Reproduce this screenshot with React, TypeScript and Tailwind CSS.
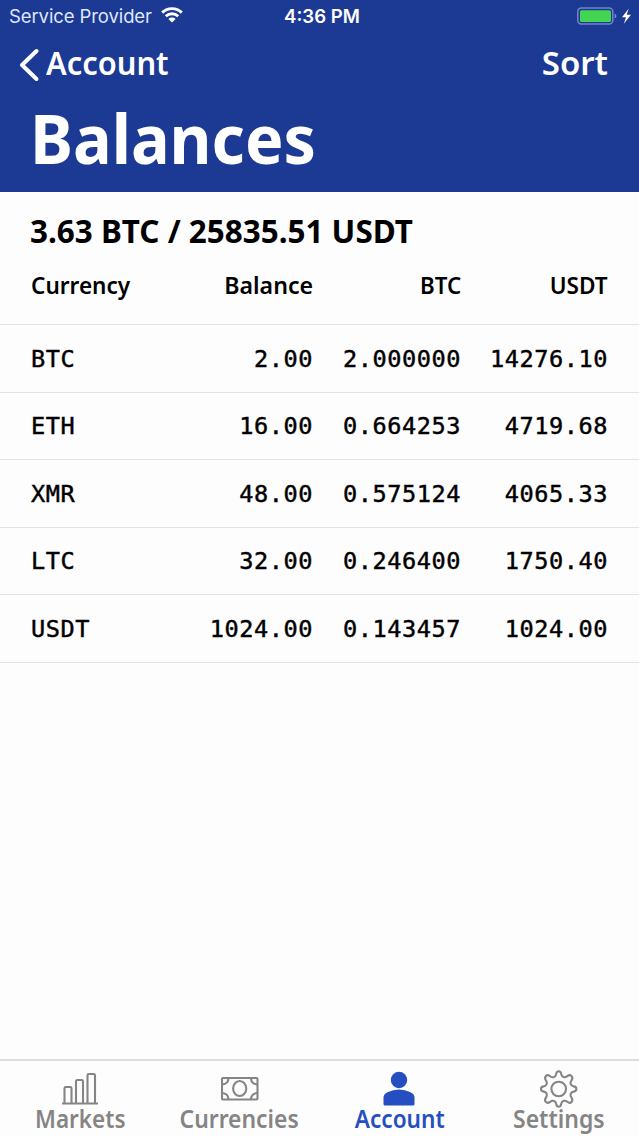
import React from "react";

const rows = [
  ["BTC", "2.00", "2.000000", "14276.10"],
  ["ETH", "16.00", "0.664253", "4719.68"],
  ["XMR", "48.00", "0.575124", "4065.33"],
  ["LTC", "32.00", "0.246400", "1750.40"],
  ["USDT", "1024.00", "0.143457", "1024.00"],
];

function StatusBar() {
  return (
    <div className="grid h-8 grid-cols-3 items-center pl-[9px] pr-[7px] font-['Inter',sans-serif] leading-8">
      <div className="flex items-center gap-[9px] whitespace-nowrap">
        <span className="-mt-px text-[18.5px] tracking-[-0.1px] text-[#dfe8ff]">Service Provider</span>
        <svg className="-mt-0.5 h-4 w-[22px]" viewBox="0 0 22 16" fill="none" stroke="white" strokeWidth="2.9">
          <path d="M1.2 5.6a14 14 0 0 1 19.6 0M4.8 9.3a9 9 0 0 1 12.4 0" />
          <path d="M7.4 12a5.2 5.2 0 0 1 7.2 0L11 15.6z" fill="white" stroke="none" />
        </svg>
      </div>
      <div className="-mt-px whitespace-nowrap pl-[3px] text-center text-[18.6px] font-semibold">4:36 PM</div>
      <div className="flex items-center justify-end">
        <svg className="-mt-px h-[18px] w-[56px]" viewBox="0 0 56 18">
          <rect x="1.8" y="1" width="35" height="16" rx="3.5" fill="none" stroke="#7086c6" strokeWidth="1.5" />
          <rect x="4" y="3.2" width="31" height="11.8" rx="1.5" fill="#43d551" />
          <path d="M38.5 6.5q2 .5 2 2.5t-2 2.500z" fill="#7086c6" />
          <path d="M52.800 1.500 46 10.200h4L47.800 16.800 55 7.800h-4.300z" fill="white" />
        </svg>
      </div>
    </div>
  );
}

const tabs = [
  {
    label: "Markets",
    scale: "scale-x-[0.9]",
    icon: (
      <g fill="none" stroke="#858585" strokeWidth="2.1">
        <path d="M2 34.500h36M4.500 34V19.300q0-1.300 1.300-1.300h4.400q1.300 0 1.300 1.300V34M16 34V12.300q0-1.300 1.300-1.300h4.400q1.300 0 1.300 1.300V34M27.500 34V6.300q0-1.300 1.300-1.300h4.900q1.300 0 1.300 1.300V34" />
      </g>
    ),
  },
  {
    label: "Currencies",
    scale: "scale-x-[0.915]",
    icon: (
      <g fill="none" stroke="#858585" strokeWidth="2.1">
        <rect x="2" y="9" width="35.500" height="21.500" rx="1" />
        <ellipse cx="19.700" cy="19.500" rx="6.600" ry="7.500" />
        <path d="M8.500 9q0 6-6.500 6.500M31 9q0 6 6.500 6.500M8.500 30.500q0-6-6.500-6.500M31 30.500q0-6 6.500-6.500" />
      </g>
    ),
  },
  {
    label: "Account",
    active: true,
    scale: "scale-x-[0.905]",
    icon: (
      <g fill="#254fc0">
        <circle cx="20" cy="11" r="8.200" />
        <path d="M4.500 36.500V28Q5 24.500 9 23q5-2.500 11-2.500T31 23q4 1.500 4.500 5v7q0 1.500-1.500 1.500H6q-1.500 0-1.500-1.500z" />
      </g>
    ),
  },
  {
    label: "Settings",
    scale: "scale-x-[0.92]",
    icon: (
      <g fill="none" stroke="#858585" strokeWidth="2.1" strokeLinejoin="round">
        <circle cx="19.700" cy="20" r="7.300" />
        <path d="M17.200 5.200Q17.400 2.300 19.700 2.300T22.200 5.200Q22.600 7.600 25 8.200 26.500 8.600 28.300 7.200 30.700 5.300 32.500 7T32.500 11.400Q31.100 13.300 31.600 14.800 32.200 17 34.600 17.400 37.400 17.600 37.400 20T34.600 22.600Q32.200 23 31.600 25.200 31.100 26.700 32.500 28.600 34.200 31.200 32.500 33T28.300 32.800Q26.500 31.400 25 31.800 22.600 32.400 22.200 34.800 22 37.700 19.700 37.700T17.200 34.800Q16.800 32.400 14.400 31.800 12.900 31.400 11.100 32.800 8.700 34.700 6.900 33T6.900 28.600Q8.300 26.700 7.800 25.200 7.200 23 4.800 22.600 2 22.400 2 20T4.800 17.400Q7.200 17 7.800 14.800 8.300 13.300 6.900 11.400 5.200 8.800 6.900 7T11.100 7.200Q12.900 8.600 14.400 8.200 16.800 7.600 17.200 5.200z" />
      </g>
    ),
  },
];

export default function App() {
  return (
    <div className="flex h-[1136px] w-[639px] flex-col overflow-hidden bg-[#fefdfe] font-['Noto_Sans',sans-serif] text-black">
      <header className="h-48 shrink-0 bg-[#1c3994] text-white">
        <StatusBar />
        <div className="flex h-[62px] items-center justify-between pl-[19px] pr-[31px] text-[33px] font-semibold leading-[60px]">
          <div className="flex items-center gap-[6px]">
            <svg className="mt-1 h-[34px] w-[21px]" viewBox="0 0 21 34" fill="none" stroke="white" strokeWidth="4" strokeLinecap="round" strokeLinejoin="round">
              <path d="M17.500 3 3 17l14.500 14" />
            </svg>
            <span className="origin-left scale-x-[0.935]">Account</span>
          </div>
          <span className="origin-right">Sort</span>
        </div>
        <h1 className="ml-[30px] w-fit origin-left scale-x-[0.943] text-[68.500px] font-bold leading-[88px]">Balances</h1>
      </header>

      <main className="flex-1">
        <h2 className="ml-[30px] h-[78px] w-fit origin-left scale-x-[0.952] whitespace-nowrap text-[33px] font-bold leading-[78px]">3.63 BTC / 25835.51 USDT</h2>
        <table className="w-full table-fixed border-collapse">
          <colgroup>
            <col className="w-[150px]" />
            <col className="w-[163px]" />
            <col className="w-[148px]" />
            <col />
          </colgroup>
          <thead>
            <tr className="h-[54.500px] border-b border-[#e2e1e4] align-top text-[24px] font-semibold leading-[30px]">
              <th className="pl-[31px] text-left font-semibold"><span className="inline-block origin-left scale-x-[0.94]">Currency</span></th>
              <th className="text-right font-semibold"><span className="inline-block origin-right scale-x-[0.965]">Balance</span></th>
              <th className="text-right font-semibold"><span className="inline-block origin-right scale-x-[0.93]">BTC</span></th>
              <th className="pr-[31px] text-right font-semibold"><span className="inline-block origin-right scale-x-[0.94]">USDT</span></th>
            </tr>
          </thead>
          <tbody className="font-['DejaVu_Sans_Mono',monospace] text-[23.600px] tracking-[0.55px] [-webkit-text-stroke:0.45px_black]">
            {rows.map((row) => (
              <tr key={row[0]} className="h-[67.500px] border-b border-[#e2e1e4]">
                <td className="pl-[31px] pt-[2px]">{row[0]}</td>
                <td className="pt-[2px] text-right">{row[1]}</td>
                <td className="pt-[2px] text-right">{row[2]}</td>
                <td className="pr-[31px] pt-[2px] text-right">{row[3]}</td>
              </tr>
            ))}
          </tbody>
        </table>
      </main>

      <nav className="grid h-[77px] shrink-0 grid-cols-4 border-t-2 border-[#dedde0] pt-[8px]">
        {tabs.map((tab) => (
          <div key={tab.label} className={tab.active ? "flex flex-col items-center text-[#254fc0]" : "flex flex-col items-center text-[#858585]"}>
            <svg className="h-10 w-10 shrink-0" viewBox="0 0 40 40">{tab.icon}</svg>
            <span className={"-mt-[7px] text-[25px] font-semibold leading-[32px] " + tab.scale}>{tab.label}</span>
          </div>
        ))}
      </nav>
    </div>
  );
}
